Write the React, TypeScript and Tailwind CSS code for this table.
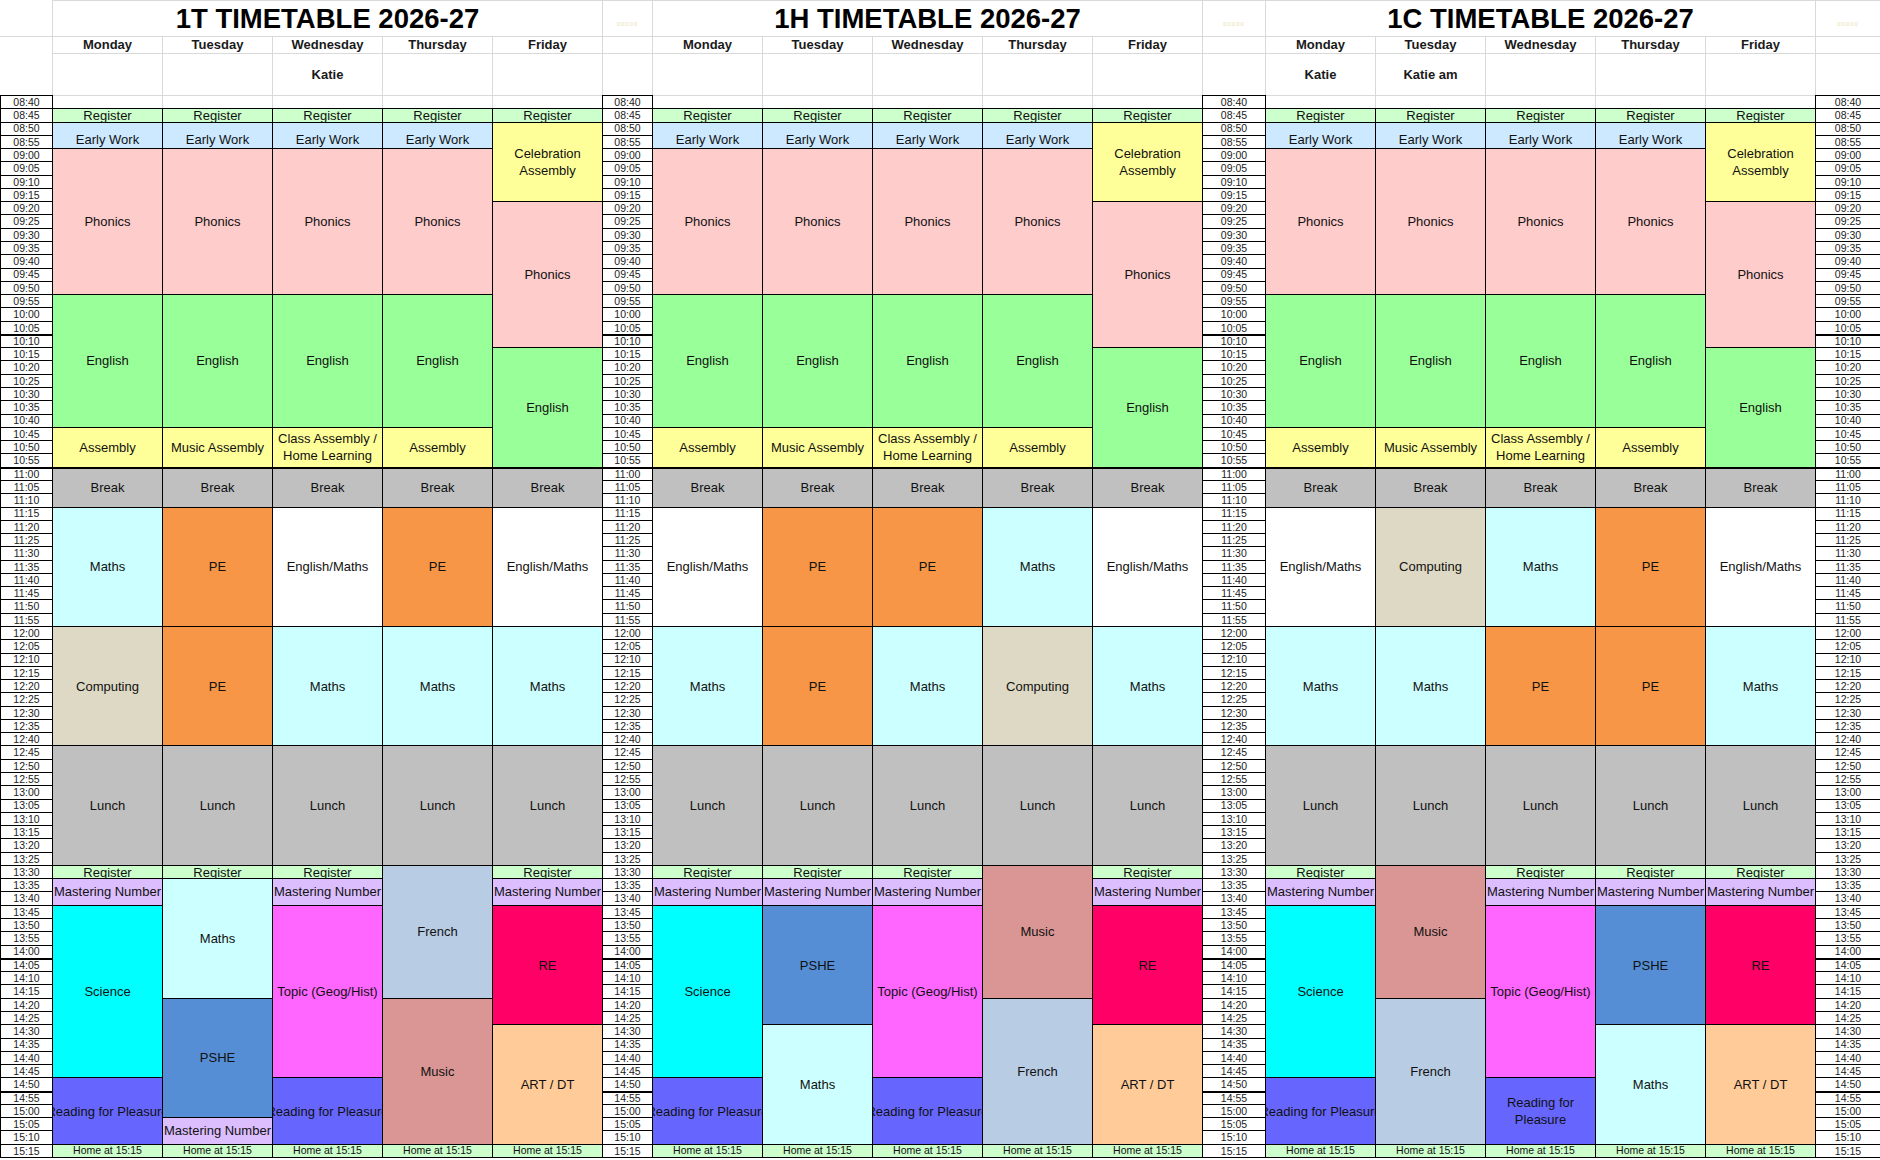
import React from "react";

type Block = {
  t: string;
  n: number;
  wrap?: boolean;
  low?: boolean;
  blank?: boolean;
};

const SPAN: Record<number, string> = {
  1: "row-span-1",
  2: "row-span-2",
  3: "row-span-3",
  5: "row-span-5",
  6: "row-span-6",
  9: "row-span-9",
  10: "row-span-10",
  11: "row-span-11",
  13: "row-span-13",
};

const COLOR: Record<string, string> = {
  Register: "bg-[#ccffcc]",
  "Early Work": "bg-[#cce9ff]",
  Phonics: "bg-[#ffcccc]",
  English: "bg-[#99ff99]",
  Assembly: "bg-[#ffff99]",
  "Music Assembly": "bg-[#ffff99]",
  "Class Assembly / Home Learning": "bg-[#ffff99]",
  "Celebration Assembly": "bg-[#ffff99]",
  Break: "bg-[#c0c0c0]",
  Lunch: "bg-[#c0c0c0]",
  Maths: "bg-[#ccffff]",
  "English/Maths": "bg-white",
  PE: "bg-[#f79646]",
  Computing: "bg-[#ddd9c4]",
  "Mastering Number": "bg-[#dcbeff]",
  Science: "bg-[#00ffff]",
  PSHE: "bg-[#558ed5]",
  "Topic (Geog/Hist)": "bg-[#ff66ff]",
  "Reading for Pleasure": "bg-[#6666ff]",
  French: "bg-[#b8cce4]",
  Music: "bg-[#da9694]",
  RE: "bg-[#ff0066]",
  "ART / DT": "bg-[#ffcc99]",
  "Home at 15:15": "bg-[#ccffcc]",
};

const DAYS = ["Monday", "Tuesday", "Wednesday", "Thursday", "Friday"];

const TIMES = Array.from({ length: 80 }, (_, i) => {
  const m = 8 * 60 + 40 + i * 5;
  return `${String(Math.floor(m / 60)).padStart(2, "0")}:${String(m % 60).padStart(2, "0")}`;
});

// rows where the time column has a heavier top line
const THICK = [18, 28, 65, 75];

const b = (t: string, n: number, extra: Partial<Block> = {}): Block => ({ t, n, ...extra });

// morning: 08:40 -> 11:10
const morning = (asm: string, wrap = false): Block[] => [
  { t: "", n: 1, blank: true },
  b("Register", 1),
  b("Early Work", 2, { low: true }),
  b("Phonics", 11),
  b("English", 10),
  b(asm, 3, { wrap }),
  b("Break", 3),
];

const friMorning: Block[] = [
  { t: "", n: 1, blank: true },
  b("Register", 1),
  b("Celebration Assembly", 6, { wrap: true }),
  b("Phonics", 11),
  b("English", 9),
  b("Break", 3),
];

// 11:15 -> 13:25
const mid = (a: string, c: string): Block[] => [b(a, 9), b(c, 9), b("Lunch", 9)];

// afternoons: 13:30 -> 15:15
const pmA = (subject: string, wrapRead = false): Block[] => [
  b("Register", 1),
  b("Mastering Number", 2),
  b(subject, 13),
  b("Reading for Pleasure", 5, { wrap: wrapRead }),
  b("Home at 15:15", 1),
];
const pmTue1T: Block[] = [
  b("Register", 1),
  b("Maths", 9),
  b("PSHE", 9),
  b("Mastering Number", 2),
  b("Home at 15:15", 1),
];
const pmTwo = (a: string, c: string): Block[] => [b(a, 10), b(c, 11), b("Home at 15:15", 1)];
const pmFri: Block[] = [
  b("Register", 1),
  b("Mastering Number", 2),
  b("RE", 9),
  b("ART / DT", 9),
  b("Home at 15:15", 1),
];
const pmPshe: Block[] = [
  b("Register", 1),
  b("Mastering Number", 2),
  b("PSHE", 9),
  b("Maths", 9),
  b("Home at 15:15", 1),
];

const CLASS_ASM = "Class Assembly / Home Learning";

const SECTIONS = [
  {
    title: "1T TIMETABLE 2026-27",
    names: ["", "", "Katie", "", ""],
    days: [
      [...morning("Assembly"), ...mid("Maths", "Computing"), ...pmA("Science")],
      [...morning("Music Assembly"), ...mid("PE", "PE"), ...pmTue1T],
      [...morning(CLASS_ASM, true), ...mid("English/Maths", "Maths"), ...pmA("Topic (Geog/Hist)")],
      [...morning("Assembly"), ...mid("PE", "Maths"), ...pmTwo("French", "Music")],
      [...friMorning, ...mid("English/Maths", "Maths"), ...pmFri],
    ],
  },
  {
    title: "1H TIMETABLE 2026-27",
    names: ["", "", "", "", ""],
    days: [
      [...morning("Assembly"), ...mid("English/Maths", "Maths"), ...pmA("Science")],
      [...morning("Music Assembly"), ...mid("PE", "PE"), ...pmPshe],
      [...morning(CLASS_ASM, true), ...mid("PE", "Maths"), ...pmA("Topic (Geog/Hist)")],
      [...morning("Assembly"), ...mid("Maths", "Computing"), ...pmTwo("Music", "French")],
      [...friMorning, ...mid("English/Maths", "Maths"), ...pmFri],
    ],
  },
  {
    title: "1C TIMETABLE 2026-27",
    names: ["Katie", "Katie am", "", "", ""],
    days: [
      [...morning("Assembly"), ...mid("English/Maths", "Maths"), ...pmA("Science")],
      [...morning("Music Assembly"), ...mid("Computing", "Maths"), ...pmTwo("Music", "French")],
      [...morning(CLASS_ASM, true), ...mid("Maths", "PE"), ...pmA("Topic (Geog/Hist)", true)],
      [...morning("Assembly"), ...mid("PE", "PE"), ...pmPshe],
      [...friMorning, ...mid("English/Maths", "Maths"), ...pmFri],
    ],
  },
];

const COLS =
  "grid-cols-[51px_repeat(5,109px)_49px_repeat(5,109px)_62px_repeat(5,109px)_64px]";

function TimeColumn() {
  return (
    <>
      {TIMES.map((time, i) => (
        <div
          key={time}
          className={`bg-white flex items-center justify-center overflow-hidden text-[10.5px] leading-none text-[#1a1a1a] ${
            THICK.includes(i) ? "border-t border-black" : ""
          }`}
        >
          {time}
        </div>
      ))}
    </>
  );
}

function Cell({ block, last }: { block: Block; last: boolean }) {
  if (block.blank) {
    return (
      <div
        className={`bg-white -mt-px border-t border-[#d9d9d9] ${last ? "" : "-mr-px border-r"}`}
      />
    );
  }
  const small = block.t === "Home at 15:15";
  return (
    <div
      className={`${SPAN[block.n]} ${COLOR[block.t]} flex justify-center overflow-x-clip text-[#111] ${
        block.low ? "items-end pb-[1px]" : "items-center"
      } ${block.t === "Break" ? "border-t border-black" : ""} ${small ? "text-[10.5px]" : "text-[13px]"}`}
    >
      <span
        className={
          block.wrap ? "text-center leading-[17px] px-[2px]" : "whitespace-nowrap leading-[15px]"
        }
      >
        {block.t}
      </span>
    </div>
  );
}

export default function App() {
  return (
    <div className="w-[1880px] h-[1160px] overflow-hidden bg-white font-['Liberation_Sans',Arial,sans-serif] text-black">
      {/* header rows: titles, days, staff */}
      <div className={`grid ${COLS} grid-rows-[35px_16px_41px] gap-px bg-[#d9d9d9] pl-px pt-px`}>
        <div className="-ml-px -mt-px bg-white" />
        {SECTIONS.map((s) => (
          <React.Fragment key={s.title}>
            <div className="col-span-5 bg-white flex items-center justify-center text-[27.5px] font-bold leading-none">
              {s.title}
            </div>
            <div className="bg-white flex items-end justify-center pb-[9px] text-[6px] leading-none tracking-[1px] text-[#e9dfb0]">
              00000
            </div>
          </React.Fragment>
        ))}

        <div className="row-span-2 -ml-px bg-white" />
        {SECTIONS.map((s) => (
          <React.Fragment key={s.title + "-days"}>
            {DAYS.map((d) => (
              <div key={d} className="bg-white flex items-center justify-center text-[13px] font-bold text-[#1a1a1a]">
                {d}
              </div>
            ))}
            <div className="bg-white" />
          </React.Fragment>
        ))}

        {SECTIONS.map((s) => (
          <React.Fragment key={s.title + "-names"}>
            {s.names.map((n, i) => (
              <div key={i} className="bg-white flex items-center justify-center text-[13px] font-bold text-[#1a1a1a]">
                {n}
              </div>
            ))}
            <div className="bg-white" />
          </React.Fragment>
        ))}
      </div>

      {/* timetable body: 08:40 -> 15:15 in 5 minute rows */}
      <div
        className={`grid ${COLS} grid-rows-[repeat(80,minmax(0,1fr))] grid-flow-col gap-px bg-black border-l border-y border-black h-[1063px]`}
      >
        <TimeColumn />
        {SECTIONS.map((s) => (
          <React.Fragment key={s.title + "-body"}>
            {s.days.map((blocks, di) =>
              blocks.map((block, bi) => <Cell key={`${di}-${bi}`} block={block} last={di === 4} />)
            )}
            <TimeColumn />
          </React.Fragment>
        ))}
      </div>
    </div>
  );
}
